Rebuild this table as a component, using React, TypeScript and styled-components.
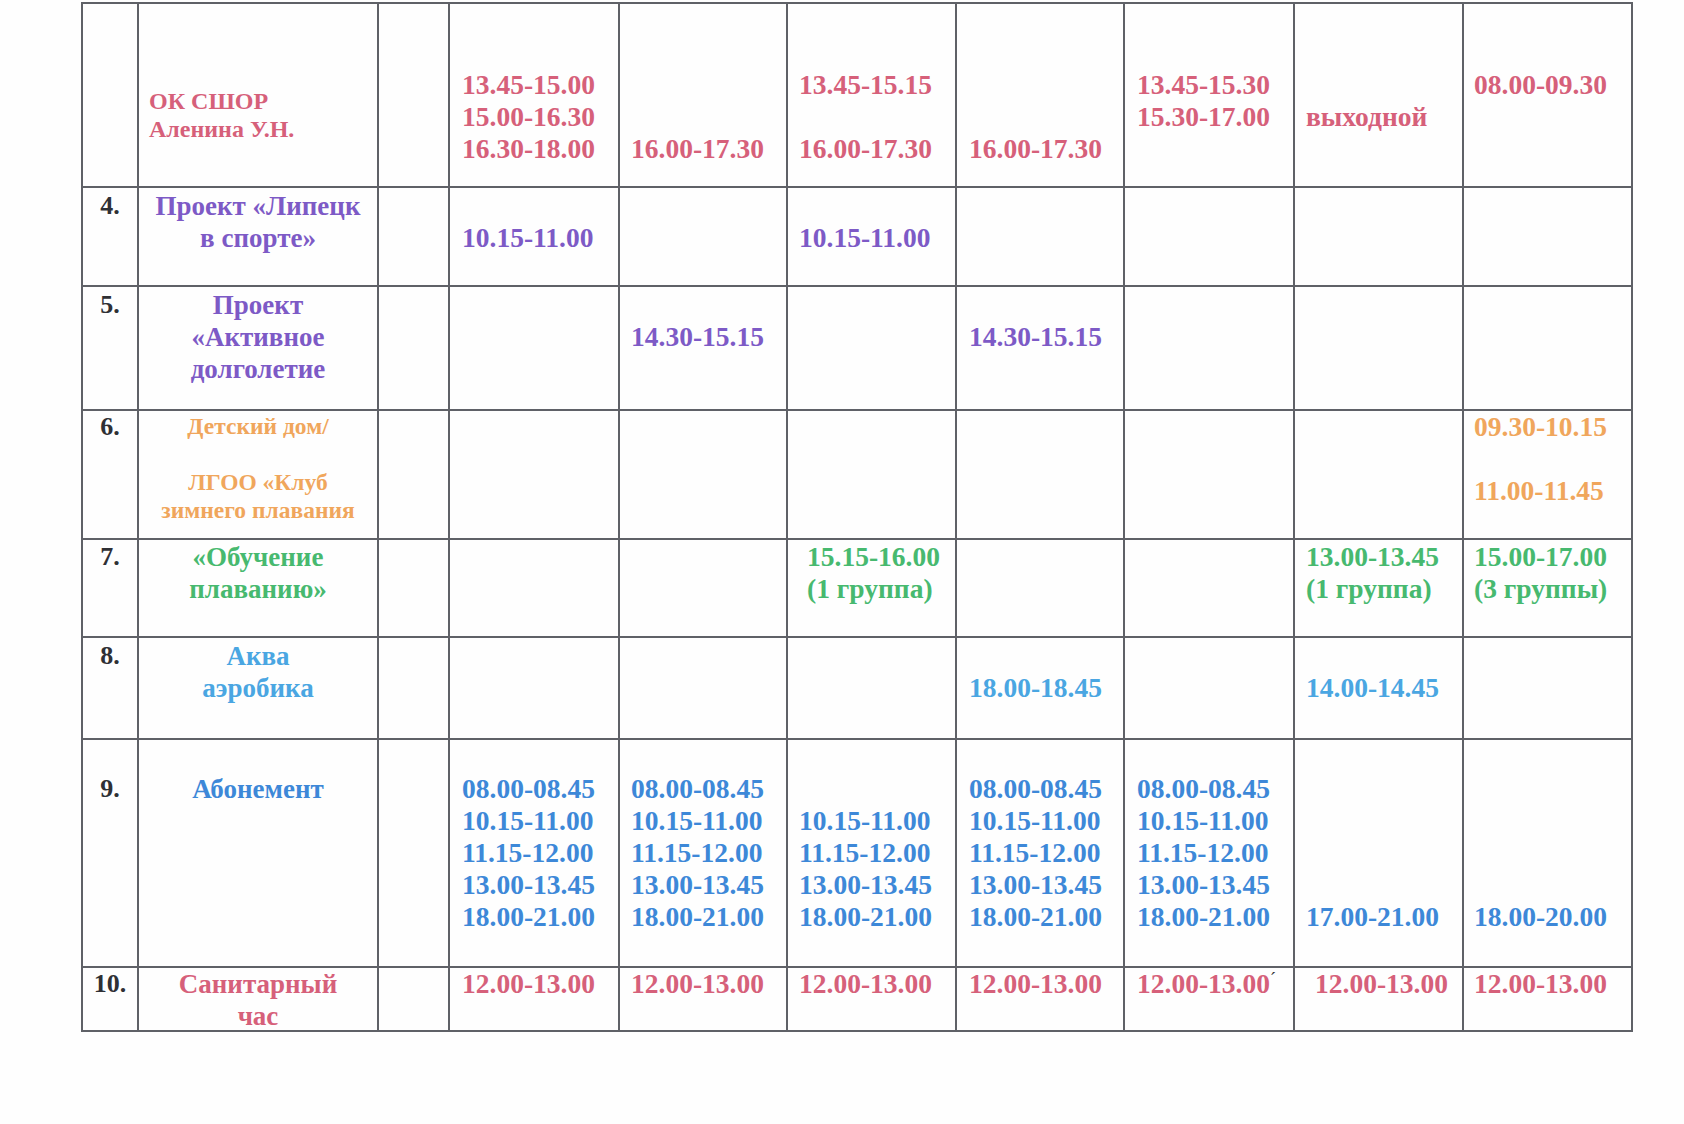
import React from 'react';
import styled, { createGlobalStyle } from 'styled-components';

const GlobalStyle = createGlobalStyle`
  html, body {
    margin: 0;
    padding: 0;
    background: #ffffff;
  }
  body {
    font-family: "Liberation Serif", "Times New Roman", serif;
  }
`;

const PINK = '#d6607a';
const PURPLE = '#7d5ac6';
const ORANGE = '#f0a65c';
const GREEN = '#47b96f';
const AQUA = '#4aa6e2';
const BLUE = '#3d88d8';

const COLS = [54, 238, 69, 168, 166, 167, 166, 168, 167, 167];
const ROWS = [182, 97, 122, 127, 96, 100, 226, 62];
const DAY_PAD = [12, 11, 11, 12, 12, 11, 10];

const Page = styled.div`
  width: 1684px;
  height: 1124px;
  box-sizing: border-box;
  padding: 2px 0 0 81px;
  background: #fefefe;
`;

const Grid = styled.div<{ $cols: string; $rows: string }>`
  display: grid;
  grid-template-columns: ${(p) => p.$cols};
  grid-template-rows: ${(p) => p.$rows};
  gap: 2px;
  padding: 2px;
  width: max-content;
  background: #5f6167;
`;

const Cell = styled.div`
  background: #fefefe;
  box-sizing: border-box;
`;

const NumCell = styled(Cell)<{ $pt: number }>`
  padding-top: ${(p) => p.$pt}px;
  text-align: center;
  font-size: 26px;
  line-height: 32px;
  font-weight: 700;
  color: #2f3035;
`;

const NameCell = styled(Cell)<{
  $color: string;
  $size: number;
  $lh: number;
  $align: 'left' | 'center';
  $pt: number;
  $pl: number;
}>`
  padding: ${(p) => p.$pt}px 0 0 ${(p) => p.$pl}px;
  text-align: ${(p) => p.$align};
  font-size: ${(p) => p.$size}px;
  line-height: ${(p) => p.$lh}px;
  font-weight: 700;
  color: ${(p) => p.$color};
  white-space: nowrap;
`;

const TimeCell = styled(Cell)<{ $color: string; $pt: number; $pl: number }>`
  padding: ${(p) => p.$pt}px 0 0 ${(p) => p.$pl}px;
  font-size: 27.5px;
  line-height: 32px;
  font-weight: 700;
  color: ${(p) => p.$color};
  white-space: nowrap;
`;

const Line = styled.div`
  height: 1lh;
`;

const Tick = styled.span`
  font-size: 18px;
  line-height: 0;
  font-weight: 400;
  color: #333;
  vertical-align: 8px;
`;

type Day = { lines: string[]; pl?: number; mark?: boolean } | null;

type Row = {
  num: string;
  pt: number;
  color: string;
  name: { lines: string[]; size?: number; lh?: number; align?: 'left' | 'center'; pt?: number; pl?: number };
  days: Day[];
};

const d = (...lines: string[]): Day => ({ lines });
const ABON = ['08.00-08.45', '10.15-11.00', '11.15-12.00', '13.00-13.45', '18.00-21.00'];
const SAN = '12.00-13.00';

const rows: Row[] = [
  {
    num: '',
    pt: 65,
    color: PINK,
    name: { lines: ['ОК СШОР', 'Аленина У.Н.'], size: 24, lh: 28, align: 'left', pt: 83, pl: 10 },
    days: [
      d('13.45-15.00', '15.00-16.30', '16.30-18.00'),
      d('', '', '16.00-17.30'),
      d('13.45-15.15', '', '16.00-17.30'),
      d('', '', '16.00-17.30'),
      d('13.45-15.30', '15.30-17.00'),
      d('', 'выходной'),
      d('08.00-09.30'),
    ],
  },
  {
    num: '4.',
    pt: 2,
    color: PURPLE,
    name: { lines: ['Проект «Липецк', 'в спорте»'] },
    days: [d('', '10.15-11.00'), null, d('', '10.15-11.00'), null, null, null, null],
  },
  {
    num: '5.',
    pt: 2,
    color: PURPLE,
    name: { lines: ['Проект', '«Активное', 'долголетие'] },
    days: [null, d('', '14.30-15.15'), null, d('', '14.30-15.15'), null, null, null],
  },
  {
    num: '6.',
    pt: 0,
    color: ORANGE,
    name: { lines: ['Детский дом/', '', 'ЛГОО «Клуб', 'зимнего плавания'], size: 23.5, lh: 28, pt: 1 },
    days: [null, null, null, null, null, null, d('09.30-10.15', '', '11.00-11.45')],
  },
  {
    num: '7.',
    pt: 1,
    color: GREEN,
    name: { lines: ['«Обучение', 'плаванию»'] },
    days: [
      null,
      null,
      { lines: ['15.15-16.00', '(1 группа)'], pl: 19 },
      null,
      null,
      d('13.00-13.45', '(1 группа)'),
      d('15.00-17.00', '(3 группы)'),
    ],
  },
  {
    num: '8.',
    pt: 2,
    color: AQUA,
    name: { lines: ['Аква', 'аэробика'] },
    days: [null, null, null, d('', '18.00-18.45'), null, d('', '14.00-14.45'), null],
  },
  {
    num: '9.',
    pt: 33,
    color: BLUE,
    name: { lines: ['Абонемент'] },
    days: [
      d(...ABON),
      d(...ABON),
      d('', ...ABON.slice(1)),
      d(...ABON),
      d(...ABON),
      d('', '', '', '', '17.00-21.00'),
      d('', '', '', '', '18.00-20.00'),
    ],
  },
  {
    num: '10.',
    pt: 0,
    color: PINK,
    name: { lines: ['Санитарный', 'час'] },
    days: [
      d(SAN),
      d(SAN),
      d(SAN),
      d(SAN),
      { lines: [SAN], mark: true },
      { lines: [SAN], pl: 20 },
      d(SAN),
    ],
  },
];

function App() {
  return (
    <>
      <GlobalStyle />
      <Page>
        <Grid $cols={COLS.map((c) => `${c}px`).join(' ')} $rows={ROWS.map((r) => `${r}px`).join(' ')}>
          {rows.map((row, ri) => (
            <React.Fragment key={ri}>
              <NumCell $pt={row.pt}>{row.num}</NumCell>
              <NameCell
                $color={row.color}
                $size={row.name.size ?? 27}
                $lh={row.name.lh ?? 32}
                $align={row.name.align ?? 'center'}
                $pt={row.name.pt ?? row.pt}
                $pl={row.name.pl ?? 0}
              >
                {row.name.lines.map((l, i) => (
                  <Line key={i}>{l || '\u00a0'}</Line>
                ))}
              </NameCell>
              <Cell />
              {row.days.map((day, di) => (
                <TimeCell key={di} $color={row.color} $pt={row.pt} $pl={day?.pl ?? DAY_PAD[di]}>
                  {day?.lines.map((l, i) => (
                    <Line key={i}>
                      {l || '\u00a0'}
                      {day.mark && i === day.lines.length - 1 ? <Tick>´</Tick> : null}
                    </Line>
                  ))}
                </TimeCell>
              ))}
            </React.Fragment>
          ))}
        </Grid>
      </Page>
    </>
  );
}

export default App;
